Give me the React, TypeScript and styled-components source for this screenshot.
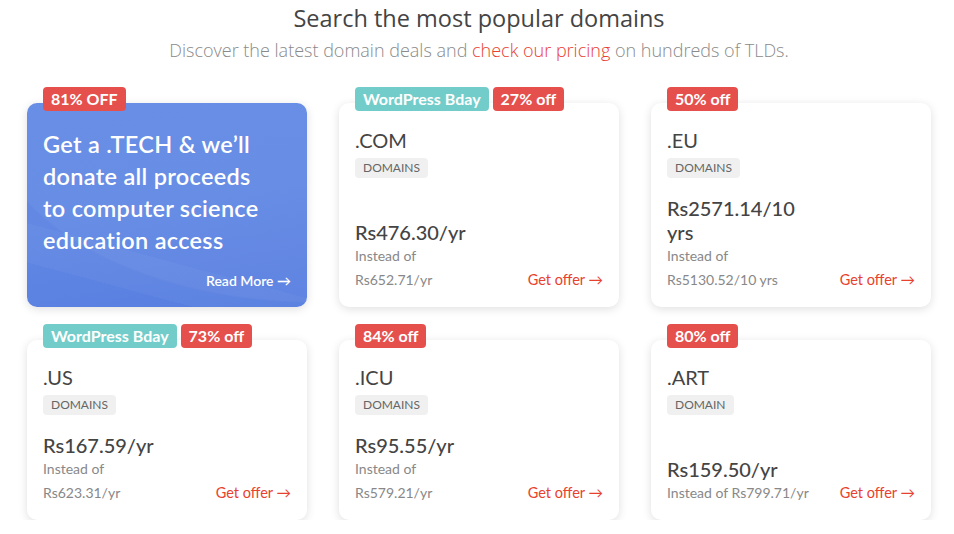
import styled, { createGlobalStyle } from "styled-components";

const GlobalStyle = createGlobalStyle`
  html, body {
    margin: 0;
    padding: 0;
    background: #ffffff;
  }
  body {
    font-family: "Lato", "Open Sans", sans-serif;
    color: #444444;
  }
`;

const Page = styled.div`
  width: 904px;
  margin-left: 27px;
  padding-top: 2px;
`;

const Header = styled.header`
  text-align: center;
  margin-bottom: 25px;
`;

const Title = styled.h2`
  margin: 0;
  font-family: "Open Sans", sans-serif;
  font-weight: 400;
  font-size: 23.5px;
  line-height: 32px;
  color: #444444;
`;

const Subtitle = styled.p`
  margin: 4px 0 0;
  font-family: "Open Sans", sans-serif;
  font-weight: 300;
  font-size: 18px;
  line-height: 24px;
  color: #8a8a8a;

  a {
    color: #e8412f;
    text-decoration: none;
  }
`;

const Grid = styled.div`
  display: grid;
  grid-template-columns: repeat(3, 280px);
  column-gap: 32px;
  row-gap: 33px;
  padding-top: 16px;
`;

const Card = styled.div<{ $hero?: boolean }>`
  position: relative;
  display: flex;
  flex-direction: column;
  padding: 25px 16px 15px;
  border-radius: 10px;
  background: ${(p) =>
    p.$hero
      ? "linear-gradient(170deg, #6389e4 0%, #6288e4 50%, #577ee0 100%)"
      : "#ffffff"};
  box-shadow: 0 2px 10px rgba(0, 0, 0, 0.13);

  ${(p) =>
    p.$hero &&
    `
    &::before {
      content: "";
      position: absolute;
      inset: 0;
      border-radius: 10px;
      background:
        radial-gradient(ellipse 330px 190px at 290px 10px, rgba(255,255,255,0.045) 99%, transparent 100%),
        linear-gradient(195deg, transparent 70%, rgba(255,255,255,0.035) 70%, rgba(255,255,255,0.035) 84%, transparent 84%);
      pointer-events: none;
    }
  `}
`;

const BadgeRow = styled.div`
  position: absolute;
  top: -16px;
  left: 16px;
  display: flex;
  gap: 4px;
  z-index: 1;
`;

const Badge = styled.span<{ $tone: "red" | "teal" }>`
  display: inline-block;
  height: 24px;
  line-height: 24px;
  padding: 0 8px;
  border-radius: 4px;
  font-size: 16px;
  font-weight: 700;
  color: #ffffff;
  background: ${(p) => (p.$tone === "teal" ? "#72cdca" : "#e5504c")};
`;

const HeroText = styled.p`
  position: relative;
  margin: 0;
  max-width: 236px;
  font-size: 23.5px;
  line-height: 32px;
  font-weight: 600;
  letter-spacing: 0.3px;
  color: #ffffff;
`;

const ReadMore = styled.a`
  position: relative;
  margin-top: auto;
  align-self: flex-end;
  font-size: 14px;
  font-weight: 600;
  color: #ffffff;
  line-height: 22px;
  text-decoration: none;
`;

const Tld = styled.div`
  font-size: 20px;
  line-height: 24px;
  color: #444444;
`;

const Chip = styled.span`
  align-self: flex-start;
  margin-top: 6px;
  padding: 3px 8px;
  border-radius: 4px;
  background: #f0f0f0;
  color: #666666;
  font-size: 12px;
  line-height: 14px;
`;

const Bottom = styled.div`
  margin-top: auto;
  padding-top: 18px;
  display: flex;
  align-items: flex-end;
  justify-content: space-between;
`;

const PriceCol = styled.div`
  display: flex;
  flex-direction: column;
`;

const Price = styled.div`
  max-width: 135px;
  font-size: 20px;
  line-height: 24px;
  font-weight: 500;
  color: #444444;
`;

const Muted = styled.div`
  font-size: 14px;
  line-height: 24px;
  color: #888888;
`;

const GetOffer = styled.a`
  font-size: 14.5px;
  line-height: 24px;
  color: #e8412f;
  text-decoration: none;
  white-space: nowrap;
`;

type Deal = {
  tld: string;
  kind: string;
  price: string;
  old: string;
  inline?: boolean;
  tags: { text: string; tone: "red" | "teal" }[];
};

const deals: Deal[] = [
  {
    tld: ".COM",
    kind: "DOMAINS",
    price: "Rs476.30/yr",
    old: "Rs652.71/yr",
    tags: [
      { text: "WordPress Bday", tone: "teal" },
      { text: "27% off", tone: "red" },
    ],
  },
  {
    tld: ".EU",
    kind: "DOMAINS",
    price: "Rs2571.14/10 yrs",
    old: "Rs5130.52/10 yrs",
    tags: [{ text: "50% off", tone: "red" }],
  },
  {
    tld: ".US",
    kind: "DOMAINS",
    price: "Rs167.59/yr",
    old: "Rs623.31/yr",
    tags: [
      { text: "WordPress Bday", tone: "teal" },
      { text: "73% off", tone: "red" },
    ],
  },
  {
    tld: ".ICU",
    kind: "DOMAINS",
    price: "Rs95.55/yr",
    old: "Rs579.21/yr",
    tags: [{ text: "84% off", tone: "red" }],
  },
  {
    tld: ".ART",
    kind: "DOMAIN",
    price: "Rs159.50/yr",
    old: "Rs799.71/yr",
    inline: true,
    tags: [{ text: "80% off", tone: "red" }],
  },
];

const DealCard = ({ deal }: { deal: Deal }) => (
  <Card>
    <BadgeRow>
      {deal.tags.map((t) => (
        <Badge key={t.text} $tone={t.tone}>
          {t.text}
        </Badge>
      ))}
    </BadgeRow>
    <Tld>{deal.tld}</Tld>
    <Chip>{deal.kind}</Chip>
    <Bottom>
      <PriceCol>
        <Price>{deal.price}</Price>
        {deal.inline ? (
          <Muted>Instead of {deal.old}</Muted>
        ) : (
          <>
            <Muted>Instead of</Muted>
            <Muted>{deal.old}</Muted>
          </>
        )}
      </PriceCol>
      <GetOffer href="#">Get offer →</GetOffer>
    </Bottom>
  </Card>
);

export default function App() {
  return (
    <>
      <GlobalStyle />
      <Page>
        <Header>
          <Title>Search the most popular domains</Title>
          <Subtitle>
            Discover the latest domain deals and <a href="#">check our pricing</a> on
            hundreds of TLDs.
          </Subtitle>
        </Header>
        <Grid>
          <Card $hero>
            <BadgeRow>
              <Badge $tone="red">81% OFF</Badge>
            </BadgeRow>
            <HeroText>
              Get a .TECH &amp; we’ll donate all proceeds to computer science
              education access
            </HeroText>
            <ReadMore href="#">Read More →</ReadMore>
          </Card>
          {deals.map((d) => (
            <DealCard key={d.tld} deal={d} />
          ))}
        </Grid>
      </Page>
    </>
  );
}
